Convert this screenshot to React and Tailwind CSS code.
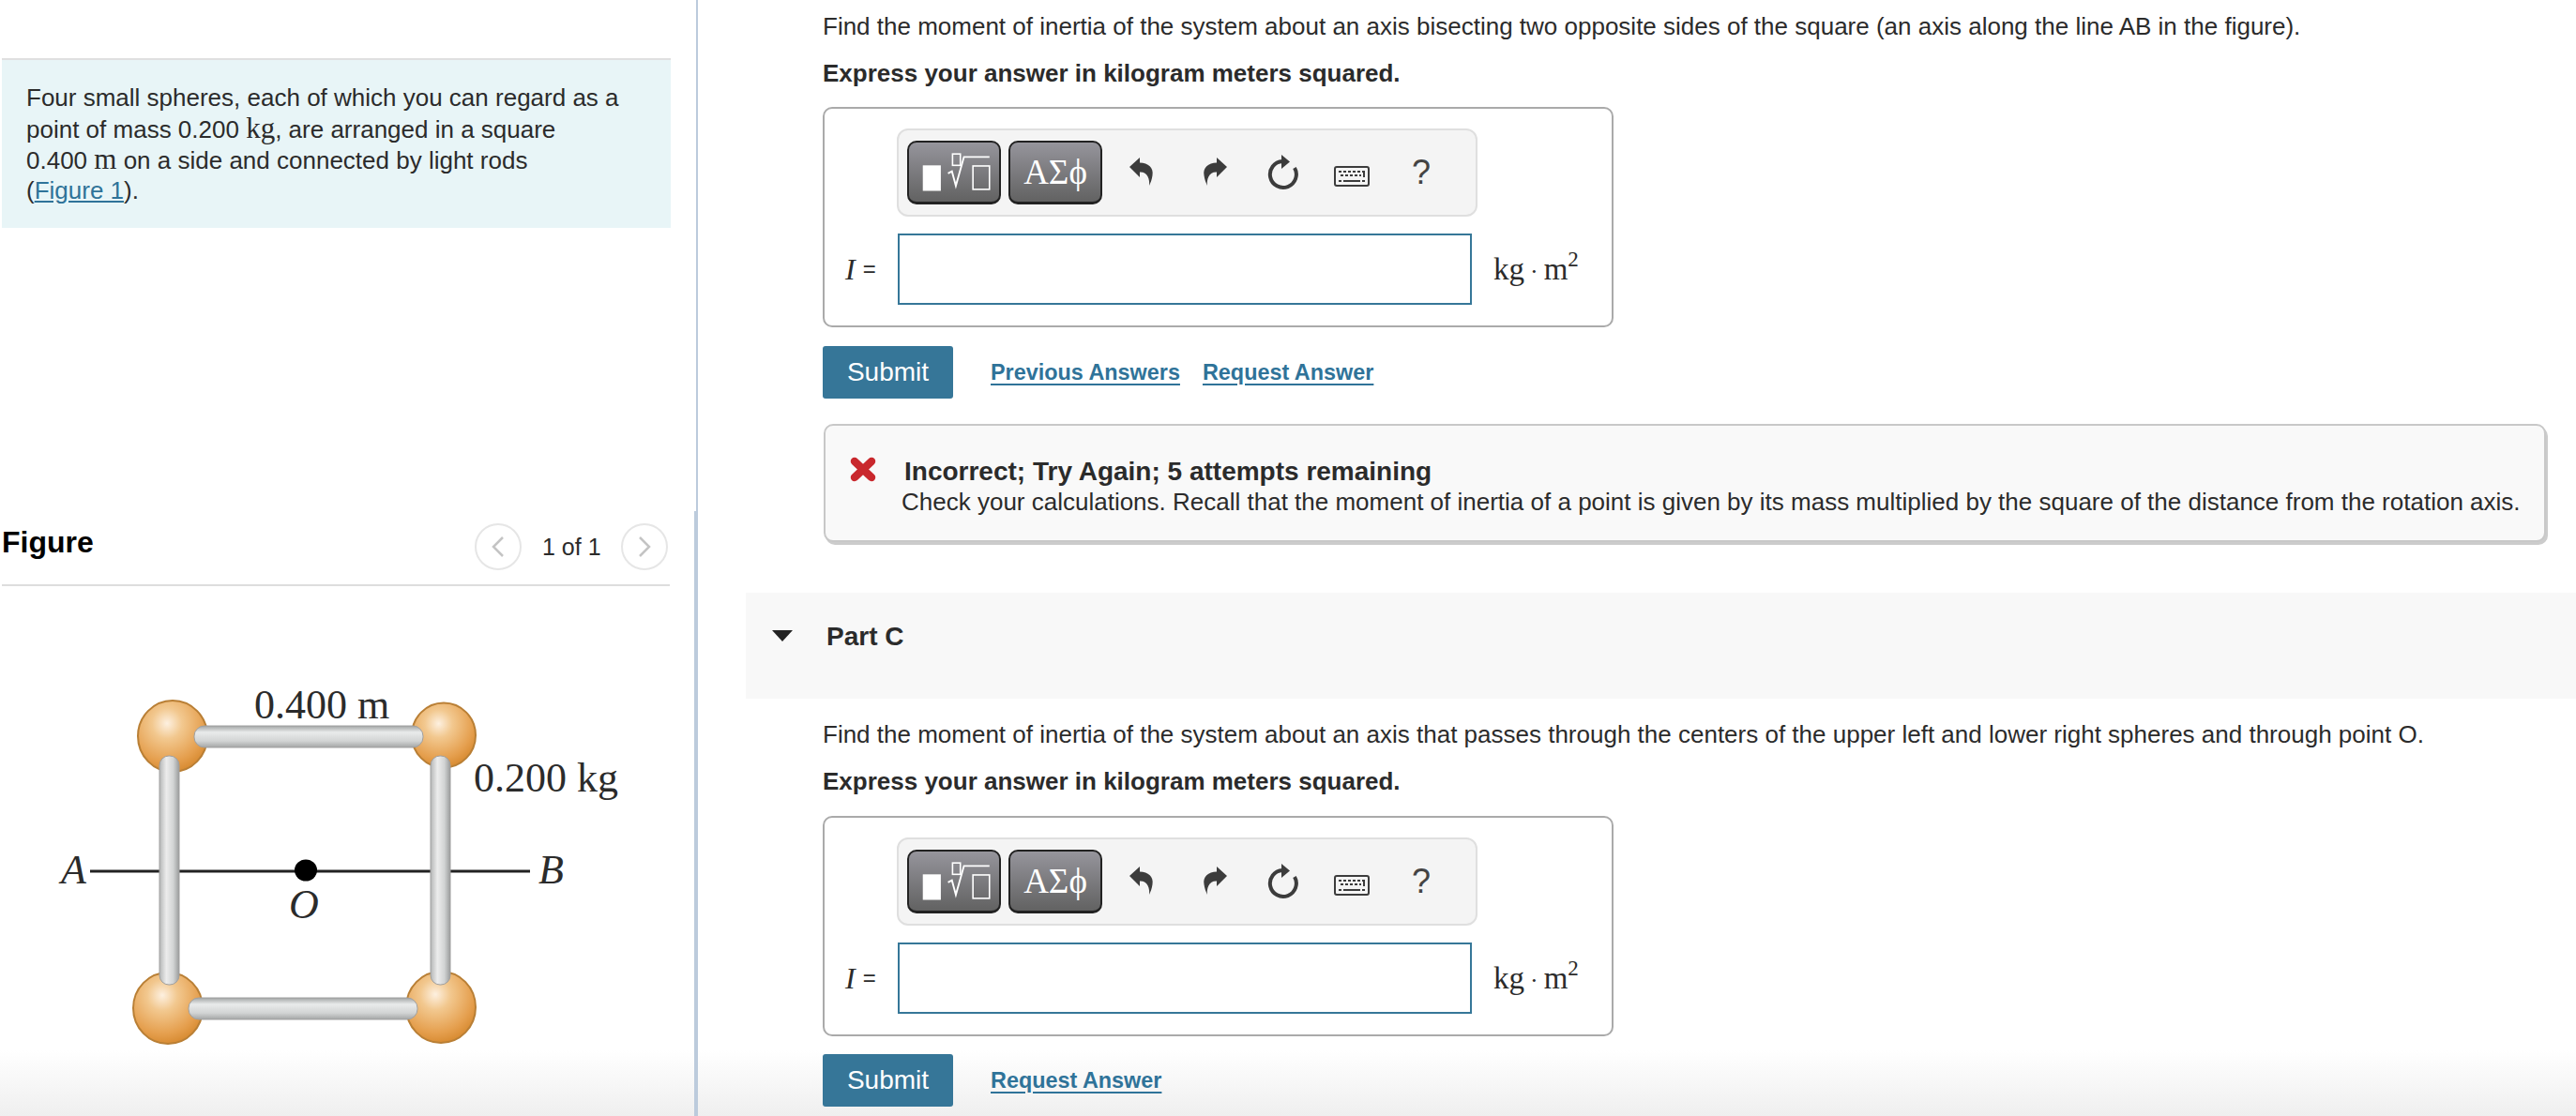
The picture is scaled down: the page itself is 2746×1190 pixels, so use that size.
const SERIF = "font-['Liberation_Serif',serif]";

const RadicalIcon = () => (
  <svg width="100" height="68" viewBox="0 0 300 204" fill="none" stroke="#fff">
    <rect x="46" y="78" width="60" height="85" fill="#fff" stroke="none" />
    <rect x="145" y="40" width="26" height="38" strokeWidth="5" />
    <polyline points="130,105 143,98 156,146 183,50 268,50" strokeWidth="6" />
    <rect x="213" y="80" width="55" height="78" strokeWidth="5" />
  </svg>
);

const UndoIcon = ({ flip }) => (
  <svg width="30" height="34" viewBox="0 0 30 34" className={flip ? "-scale-x-100" : ""}>
    <path d="M3 13 L14 3 V8.5 C23 8.5 29 14 27.5 22 C27 26 25.5 30 24 33 C25 26 22 18 14 18.5 V24 Z" fill="#3c3c3c" />
  </svg>
);

const ResetIcon = () => (
  <svg width="36" height="40" viewBox="0 0 36 40" fill="none">
    <path d="M31 15 A14 14 0 1 1 18 8" stroke="#3c3c3c" strokeWidth="4" />
    <path d="M17 1 L26 8.5 L17 16 Z" fill="#3c3c3c" />
  </svg>
);

const KeyboardIcon = () => (
  <svg width="38" height="22" viewBox="0 0 38 22">
    <rect x="1" y="1" width="36" height="20" rx="2" fill="none" stroke="#3c3c3c" strokeWidth="2" />
    <path d="M5 5h3v2H5zM10 5h3v2h-3zM15 5h3v2h-3zM20 5h3v2h-3zM25 5h3v2h-3zM30 5h3v7h-2V7h-1zM7 9h3v2H7zM12 9h3v2h-3zM17 9h3v2h-3zM22 9h3v2h-3zM27 9h2v2h-2zM5 15h3v2H5zM10 15h18v2H10zM30 15h3v2h-3z" fill="#3c3c3c" />
  </svg>
);

const AnswerBox = () => (
  <div className="w-[843px] h-[235px] border-2 border-[#aaaaaa] rounded-[10px] pt-[21px] pl-[22px] bg-white">
    <div className="ml-[55px] w-[619px] h-[94px] border-2 border-[#dfdfdf] rounded-[12px] bg-[#f4f4f4] flex items-center pl-[9px]">
      <button className="w-[100px] h-[68px] rounded-[10px] border-2 border-b-[3px] border-[#222222] bg-gradient-to-b from-[#96959c] to-[#626262] flex items-center justify-center overflow-hidden">
        <RadicalIcon />
      </button>
      <button className={`ml-[8px] w-[100px] h-[68px] rounded-[10px] border-2 border-b-[3px] border-[#222222] bg-gradient-to-b from-[#96959c] to-[#626262] text-white text-[37px] leading-none ${SERIF}`}>
        ΑΣϕ
      </button>
      <div className="ml-[26px] mb-[4px]"><UndoIcon /></div>
      <div className="ml-[50px] mb-[4px]"><UndoIcon flip /></div>
      <div className="ml-[38px]"><ResetIcon /></div>
      <div className="ml-[37px] mt-[8px]"><KeyboardIcon /></div>
      <div className="ml-[45px] w-[20px] text-[36px] leading-none text-[#444444] text-center">?</div>
    </div>
    <div className="mt-[18px] flex items-center">
      <div className="w-[56px] flex items-center text-[#2b2b2b]">
        <span className={`text-[32px] italic ${SERIF}`}>I</span>
        <span className="ml-[8px] text-[24px]">=</span>
      </div>
      <input readOnly className="w-[612px] h-[76px] border-2 border-[#367798] bg-white outline-none" />
      <div className={`ml-[23px] text-[33px] leading-none text-[#2b2b2b] ${SERIF}`}>
        kg<span className="mx-[6px] text-[26px]">·</span>m<sup className="text-[23px] top-[-14px]">2</sup>
      </div>
    </div>
  </div>
);

const ActionRow = ({ previous }) => (
  <div className="flex items-center">
    <button className="w-[139px] h-[56px] rounded-[3px] bg-[#367698] text-white text-[28px]">Submit</button>
    <a className="ml-[40px] text-[23.4px] font-bold text-[#2f7399] underline decoration-2 underline-offset-4">
      {previous ? "Previous Answers" : "Request Answer"}
    </a>
    {previous && (
      <a className="ml-[24px] text-[23.4px] font-bold text-[#2f7399] underline decoration-2 underline-offset-4">Request Answer</a>
    )}
  </div>
);

const SquareFigure = () => (
  <svg width="740" height="565" viewBox="0 625 740 565" fill="none">
    <defs>
      <radialGradient id="ball" cx="0.42" cy="0.32" r="0.72">
        <stop offset="0" stopColor="#fdf0e0" />
        <stop offset="0.3" stopColor="#f2c88f" />
        <stop offset="0.75" stopColor="#e59f4e" />
        <stop offset="1" stopColor="#d5872c" />
      </radialGradient>
      <linearGradient id="barH" x1="0" y1="0" x2="0" y2="1">
        <stop offset="0" stopColor="#a2a5a5" />
        <stop offset="0.3" stopColor="#e9ebeb" />
        <stop offset="0.7" stopColor="#d2d4d4" />
        <stop offset="1" stopColor="#a4a6a6" />
      </linearGradient>
      <linearGradient id="barV" x1="0" y1="0" x2="1" y2="0">
        <stop offset="0" stopColor="#b4b6b6" />
        <stop offset="0.35" stopColor="#ececec" />
        <stop offset="0.7" stopColor="#d2d4d4" />
        <stop offset="1" stopColor="#9a9c9c" />
      </linearGradient>
    </defs>
    <line x1="96" y1="929" x2="565" y2="929" stroke="#222222" strokeWidth="3" />
    <ellipse cx="326" cy="928" rx="12" ry="11.5" fill="#000000" />
    <ellipse cx="184" cy="785" rx="37" ry="38" fill="url(#ball)" stroke="#b97f35" strokeWidth="2" />
    <ellipse cx="473" cy="784" rx="34" ry="34.5" fill="url(#ball)" stroke="#b97f35" strokeWidth="2" />
    <ellipse cx="179" cy="1075" rx="37" ry="38" fill="url(#ball)" stroke="#b97f35" strokeWidth="2" />
    <ellipse cx="470" cy="1074" rx="37" ry="38" fill="url(#ball)" stroke="#b97f35" strokeWidth="2" />
    <g stroke="#a0a0a0" strokeWidth="1">
      <rect x="207" y="774" width="244" height="23" rx="11" fill="url(#barH)" />
      <rect x="201" y="1064" width="244" height="23" rx="11" fill="url(#barH)" />
      <rect x="170" y="806" width="21" height="244" rx="10" fill="url(#barV)" />
      <rect x="459" y="806" width="21" height="244" rx="10" fill="url(#barV)" />
    </g>
    <g fill="#2b2b2b" fontFamily="'Liberation Serif', serif" fontSize="44">
      <text x="271" y="766">0.400 m</text>
      <text x="505" y="844">0.200 kg</text>
      <text x="65" y="942" fontStyle="italic">A</text>
      <text x="574" y="942" fontStyle="italic">B</text>
      <text x="308" y="979" fontStyle="italic">O</text>
    </g>
  </svg>
);

const Chevron = ({ right }) => (
  <svg width="14" height="24" viewBox="0 0 14 24" fill="none" className={right ? "-scale-x-100" : ""}>
    <path d="M12 2 L2 12 L12 22" stroke="#c4c4c4" strokeWidth="2.5" />
  </svg>
);

const App = () => {
  return (
    <div className="relative w-[2746px] h-[1190px] overflow-hidden bg-white text-[#2b2b2b] text-[26px] leading-[32px] font-['Liberation_Sans',Arial,sans-serif]">
      <div className="absolute left-0 right-0 bottom-0 h-[70px] bg-gradient-to-b from-white to-[#efefef]" />
      <div className="relative flex h-full">
        {/* left column: problem text and figure */}
        <div className="w-[744px] shrink-0 flex flex-col">
          <div className="h-[545px] border-r-2 border-[#bccbdc] pt-[62px]">
            <div className="ml-[2px] w-[713px] h-[181px] border-t-2 border-[#dfdfe0] bg-[#e8f5f7] pt-[25px] pl-[26px] leading-[31.6px]">
              <p>Four small spheres, each of which you can regard as a</p>
              <p>point of mass 0.200 <span className={`text-[31px] leading-none ${SERIF}`}>kg</span>, are arranged in a square</p>
              <p>0.400 <span className={`text-[31px] leading-none ${SERIF}`}>m</span> on a side and connected by light rods</p>
              <p>(<a className="text-[#2f7399] underline">Figure 1</a>).</p>
            </div>
          </div>
          <div className="flex-1 border-r-4 border-[#bccbdc]">
            <div className="ml-[2px] w-[712px] h-[80px] border-b-2 border-[#dddddd] flex pt-[13px] pr-[2px]">
              <h2 className="mt-[4px] text-[32px] font-bold text-black">Figure</h2>
              <div className="ml-auto flex h-[50px] items-center">
                <div className="w-[50px] h-[50px] rounded-full border-2 border-[#e6e6e6] flex items-center justify-center"><Chevron /></div>
                <span className="ml-[22px] w-[84px] text-[25px]">1 of 1</span>
                <div className="w-[50px] h-[50px] rounded-full border-2 border-[#e6e6e6] flex items-center justify-center"><Chevron right /></div>
              </div>
            </div>
            <SquareFigure />
          </div>
        </div>

        {/* right column: answer parts */}
        <div className="flex-1 pl-[51px]">
          <div className="pl-[82px] pt-[12px]">
            <p>Find the moment of inertia of the system about an axis bisecting two opposite sides of the square (an axis along the line AB in the figure).</p>
            <p className="mt-[18px] font-bold">Express your answer in kilogram meters squared.</p>
            <div className="mt-[20px]"><AnswerBox /></div>
            <div className="mt-[20px]"><ActionRow previous /></div>
            <div className="mt-[27px] ml-[1px] w-[1836px] h-[126px] border-2 border-[#c8c8c8] rounded-[10px] bg-[#f9f9f9] shadow-[2px_3px_0_#cccccc] pt-[33px]">
              <div className="flex items-start pl-[26px]">
                <svg width="28" height="27" viewBox="0 0 28 27" fill="none">
                  <path d="M5 5 L23 22 M23 5 L5 22" stroke="#c9282d" strokeWidth="8.5" strokeLinecap="round" />
                </svg>
                <p className="ml-[30px] text-[28px] font-bold">Incorrect; Try Again; 5 attempts remaining</p>
              </div>
              <p className="pl-[81px]">Check your calculations. Recall that the moment of inertia of a point is given by its mass multiplied by the square of the distance from the rotation axis.</p>
            </div>
          </div>

          <div className="mt-[54px] h-[113px] bg-[#f8f8f8] pt-[31px] flex items-start">
            <svg width="22" height="12" viewBox="0 0 22 12" className="ml-[28px] mt-[9px]">
              <path d="M0 0 H22 L11 12 Z" fill="#222222" />
            </svg>
            <h3 className="ml-[36px] text-[28px] font-bold">Part C</h3>
          </div>

          <div className="pl-[82px] pt-[22px]">
            <p>Find the moment of inertia of the system about an axis that passes through the centers of the upper left and lower right spheres and through point O.</p>
            <p className="mt-[18px] font-bold">Express your answer in kilogram meters squared.</p>
            <div className="mt-[21px]"><AnswerBox /></div>
            <div className="mt-[19px]"><ActionRow /></div>
          </div>
        </div>
      </div>
    </div>
  );
};

export default App;
